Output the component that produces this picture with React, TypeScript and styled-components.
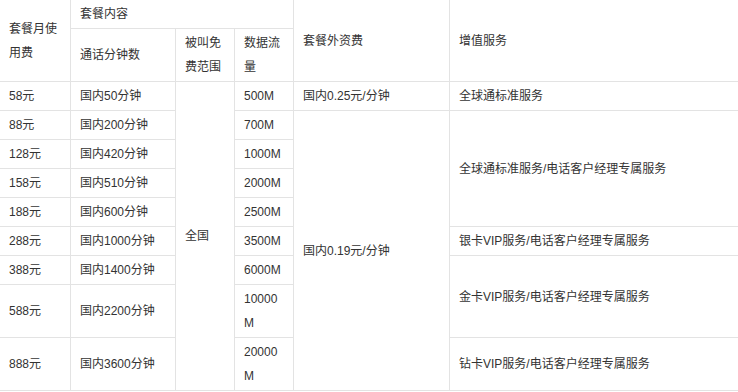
import styled, { createGlobalStyle } from "styled-components";

const GlobalStyle = createGlobalStyle`
  html, body {
    margin: 0;
    padding: 0;
    background: #fff;
  }
  body {
    font-family: "Liberation Sans", "Noto Sans CJK SC", sans-serif;
    font-size: 12px;
    color: #333;
  }
`;

const Table = styled.div`
  display: grid;
  grid-template-columns: 71px 105px 59px 59px 156px 1fr;
  grid-template-rows: 29px 53px repeat(7, 29px) 53px 53px;
  width: 738px;
`;

interface ICellProps {
  $col: string;
  $row: string;
  $last?: boolean;
}

const Cell = styled.div<ICellProps>`
  grid-column: ${(props) => props.$col};
  grid-row: ${(props) => props.$row};
  box-sizing: border-box;
  display: flex;
  align-items: center;
  padding: 0 9px;
  line-height: 24px;
  word-break: break-all;
  border-bottom: 1px solid #e3e3e3;
  border-right: ${(props) => (props.$last ? "none" : "1px solid #e3e3e3")};
`;

interface IPlan {
  price: string;
  minutes: string;
  data: string;
}

const plans: IPlan[] = [
  { price: "58元", minutes: "国内50分钟", data: "500M" },
  { price: "88元", minutes: "国内200分钟", data: "700M" },
  { price: "128元", minutes: "国内420分钟", data: "1000M" },
  { price: "158元", minutes: "国内510分钟", data: "2000M" },
  { price: "188元", minutes: "国内600分钟", data: "2500M" },
  { price: "288元", minutes: "国内1000分钟", data: "3500M" },
  { price: "388元", minutes: "国内1400分钟", data: "6000M" },
  { price: "588元", minutes: "国内2200分钟", data: "10000M" },
  { price: "888元", minutes: "国内3600分钟", data: "20000M" },
];

const services = [
  { row: "3", text: "全球通标准服务" },
  { row: "4 / 8", text: "全球通标准服务/电话客户经理专属服务" },
  { row: "8", text: "银卡VIP服务/电话客户经理专属服务" },
  { row: "9 / 11", text: "金卡VIP服务/电话客户经理专属服务" },
  { row: "11", text: "钻卡VIP服务/电话客户经理专属服务" },
];

function App() {
  return (
    <>
      <GlobalStyle />
      <Table>
        <Cell $col="1" $row="1 / 3">套餐月使用费</Cell>
        <Cell $col="2 / 5" $row="1">套餐内容</Cell>
        <Cell $col="5" $row="1 / 3">套餐外资费</Cell>
        <Cell $col="6" $row="1 / 3" $last>
          增值服务
        </Cell>
        <Cell $col="2" $row="2">通话分钟数</Cell>
        <Cell $col="3" $row="2">被叫免费范围</Cell>
        <Cell $col="4" $row="2">数据流量</Cell>

        {plans.map((plan, index) => (
          <Cell key={plan.price} $col="1" $row={String(index + 3)}>
            {plan.price}
          </Cell>
        ))}
        {plans.map((plan, index) => (
          <Cell key={plan.minutes} $col="2" $row={String(index + 3)}>
            {plan.minutes}
          </Cell>
        ))}
        <Cell $col="3" $row="3 / 12">全国</Cell>
        {plans.map((plan, index) => (
          <Cell key={plan.data} $col="4" $row={String(index + 3)}>
            {plan.data}
          </Cell>
        ))}
        <Cell $col="5" $row="3">国内0.25元/分钟</Cell>
        <Cell $col="5" $row="4 / 12">国内0.19元/分钟</Cell>
        {services.map((s) => (
          <Cell key={s.row} $col="6" $row={s.row} $last>
            {s.text}
          </Cell>
        ))}
      </Table>
    </>
  );
}

export default App;
